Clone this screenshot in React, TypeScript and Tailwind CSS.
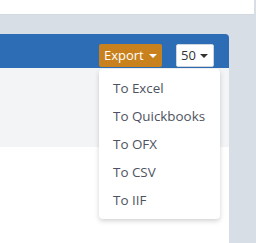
import React from 'react'

const items = ['To Excel', 'To Quickbooks', 'To OFX', 'To CSV', 'To IIF']

function Caret({ color }: { color: string }) {
  return (
    <span
      className={`inline-block w-0 h-0 border-l-[4px] border-r-[4px] border-t-[4px] border-l-transparent border-r-transparent ${color}`}
    />
  )
}

export default function App() {
  return (
    <div
      className="relative w-[256px] h-[243px] overflow-hidden bg-[#d8dee6]"
      style={{ fontFamily: '"Open Sans", "Liberation Sans", sans-serif' }}
    >
      {/* top bar */}
      <div className="h-[15px] w-[254px] bg-white border-b border-[#d2d8df]" />

      {/* panel */}
      <div className="mt-[19px] w-[229px]">
        <div className="h-[34px] bg-[#2d6db5] rounded-tr-[4px] flex items-start pt-[10px]">
          <button className="ml-[99px] h-[23px] w-[63px] rounded-[2px] bg-[#c9811d] text-white text-[13px] leading-none flex items-center gap-[5px] pl-[5px]">
            <span>Export</span>
            <Caret color="border-t-white" />
          </button>
          <button className="ml-[14px] h-[23px] w-[38px] rounded-[2px] bg-white border border-[#cfd5dc] text-[#333] text-[13px] leading-none flex items-center gap-[4px] pl-[4px]">
            <span>50</span>
            <Caret color="border-t-[#333]" />
          </button>
        </div>
        <div className="h-[79px] bg-[#f3f4f6]" />
        <div className="h-[96px] bg-white" />
      </div>

      {/* dropdown */}
      <div className="absolute left-[99px] top-[69px] w-[121px] h-[150px] bg-white rounded-[4px] shadow-[0_2px_5px_rgba(0,0,0,0.18)] py-[5px]">
        {items.map(it => (
          <div key={it} className="h-[28px] flex items-center pl-[14px] text-[13.4px] text-[#4e5260]">
            {it}
          </div>
        ))}
      </div>
    </div>
  )
}
